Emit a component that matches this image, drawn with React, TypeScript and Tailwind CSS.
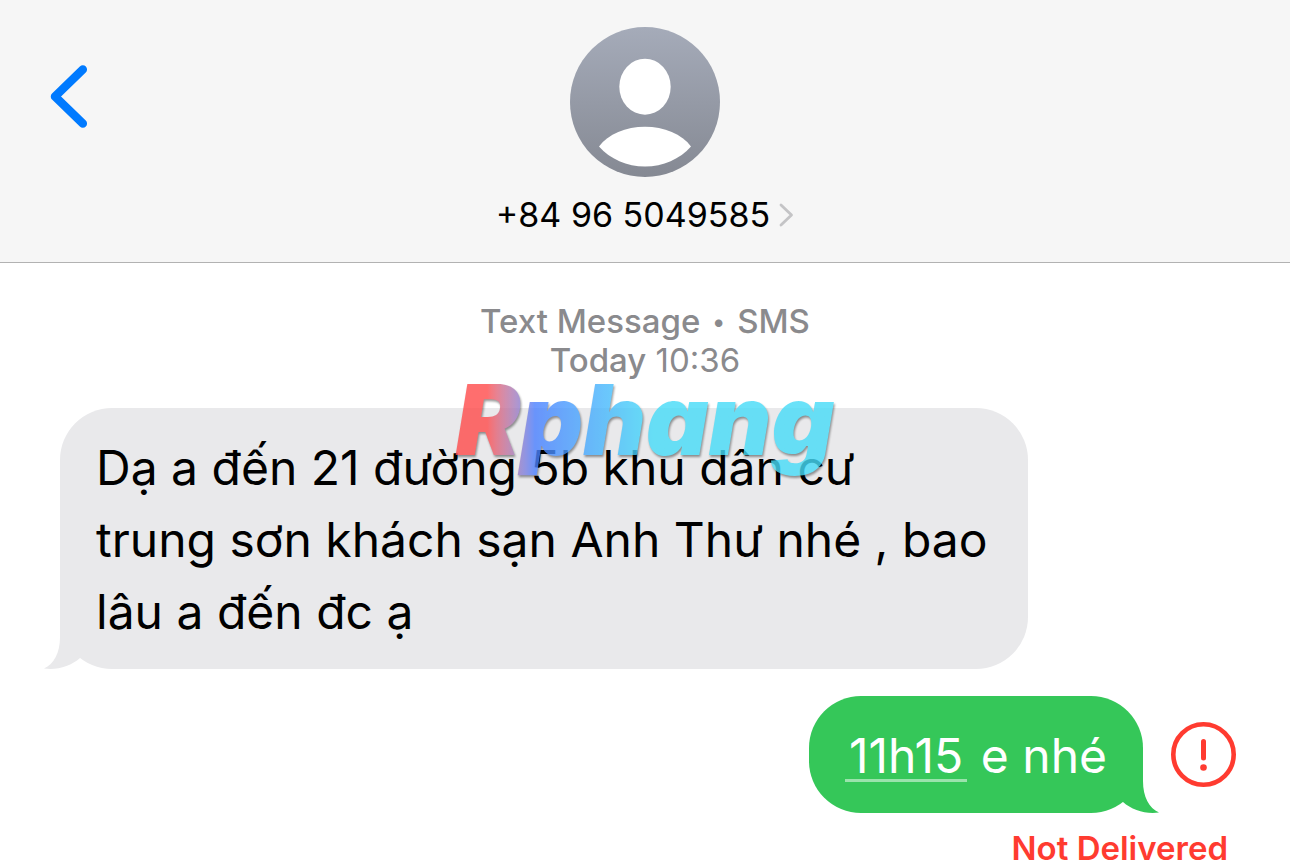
import React from 'react';

interface Message {
  from: 'them' | 'me';
  time?: string;
  text: string;
  failed?: boolean;
}

const MESSAGES: Message[] = [
  { from: 'them', text: 'Dạ a đến 21 đường 5b khu dân cư\ntrung sơn khách sạn Anh Thư nhé , bao\nlâu a đến đc ạ' },
  { from: 'me', time: '11h15', text: ' e nhé', failed: true },
];

const Avatar: React.FC = () => (
  <svg viewBox="0 0 150 150" className="size-[150px]" aria-hidden="true">
    <defs>
      <linearGradient id="avatar" x1="0" y1="0" x2="0" y2="1">
        <stop offset="0" stopColor="#a5abb9" />
        <stop offset="1" stopColor="#858993" />
      </linearGradient>
    </defs>
    <circle cx="75" cy="75" r="75" fill="url(#avatar)" />
    <ellipse cx="75" cy="59.7" rx="25.7" ry="28" fill="#fff" />
    <path d="M29 119.5C38 107 56 99.7 75 99.7S112 107 121 119.5C110 132 93 139.5 75 139.5S40 132 29 119.5Z" fill="#fff" />
  </svg>
);

const Header: React.FC = () => (
  <header className="grid grid-cols-[1fr_auto_1fr] items-start border-b border-[#b2b2b2] bg-[#f6f6f6] pt-[27px] pb-[27px]">
    <button type="button" aria-label="Back" className="ml-12 mt-9 justify-self-start">
      <svg viewBox="0 0 42 68" className="h-[68px] w-[42px]" fill="none" stroke="#007aff" strokeWidth="8.5" strokeLinecap="round" strokeLinejoin="round">
        <path d="M34.8 6.5 7 33.5 34.8 60.5" />
      </svg>
    </button>
    <button type="button" className="flex flex-col items-center gap-[18px]">
      <Avatar />
      <span className="flex items-center gap-2 text-[34px] leading-10 text-black">
        +84 96 5049585
        <svg viewBox="0 0 16 26" className="h-[26px] w-4" fill="none" stroke="#c4c4c6" strokeWidth="2.8" strokeLinecap="round" strokeLinejoin="round">
          <path d="M3 3 13.5 13 3 23" />
        </svg>
      </span>
    </button>
  </header>
);

const Bubble: React.FC<{ message: Message }> = ({ message }) => {
  if (message.from === 'them') {
    return (
      <div className="relative ml-[60px] w-3/4 rounded-[52px] bg-[#e9e9eb] px-9 pt-6 pb-[21px] text-black">
        <p className="whitespace-pre-line">{message.text}</p>
        <svg viewBox="0 0 37 52" className="absolute bottom-0 -left-4 h-[52px] w-[37px]" fill="#e9e9eb">
          <path d="M16 0V20C16 36 10 47 0 51.5C13 53.5 27 49 36 41V0Z" />
        </svg>
      </div>
    );
  }

  return (
    <div className="relative rounded-[52px] bg-[#35c759] px-9 pt-6 pb-[21px] text-white">
      <p className="whitespace-pre">
        <a href="#time" className="inline-block border-b-[3px] border-white/50 px-1 leading-[46px]">{message.time}</a>
        {message.text}
      </p>
      <svg viewBox="0 0 37 52" className="absolute -right-4 bottom-0 h-[52px] w-[37px]" fill="#35c759">
        <path d="M21 0V20C21 36 27 47 37 51.5C24 53.5 10 49 1 41V0Z" />
      </svg>
    </div>
  );
};

const RetryButton: React.FC = () => (
  <button type="button" aria-label="Retry sending">
    <svg viewBox="0 0 65 65" className="size-[65px]" fill="none" stroke="#ff3b30">
      <circle cx="32.5" cy="32.5" r="30.2" strokeWidth="4.6" />
      <path d="M32.5 19.5V36" strokeWidth="5" strokeLinecap="round" />
      <circle cx="32.5" cy="45.5" r="3.3" fill="#ff3b30" stroke="none" />
    </svg>
  </button>
);

const App: React.FC = () => {
  return (
    <div className="min-h-screen overflow-hidden bg-white font-['Inter',sans-serif]">
      <Header />

      <main className="pt-[39px]">
        <div className="text-center text-[33px] leading-[39px] text-[#8a8a8d]">
          <p className="flex items-center justify-center gap-3 font-medium">
            <span>Text Message</span>
            <span className="text-2xl leading-none">•</span>
            <span>SMS</span>
          </p>
          <p><span className="font-medium">Today</span> 10:36</p>
        </div>

        <div className="relative mt-7 flex flex-col gap-[27px] text-[48px] leading-[72px]">
          {MESSAGES.map((message, i) => (
            <div key={i} className={message.from === 'me' ? 'flex items-center justify-end gap-7 pr-[54px]' : ''}>
              <Bubble message={message} />
              {message.failed && <RetryButton />}
            </div>
          ))}

          {/* Site watermark */}
          <div className="pointer-events-none absolute inset-x-0 -top-12 flex justify-center opacity-80 drop-shadow-[1px_2px_1px_rgba(0,0,0,0.5)]">
            <span className="bg-linear-to-r from-[#ff4b4b] from-10% via-[#4a7fff] via-22% to-[#46dcf8] to-52% bg-clip-text px-2 text-[97px] leading-[120px] font-black italic text-transparent">
              Rphang
            </span>
          </div>
        </div>

        <p className="mt-[19px] pr-[62px] text-right text-[33px] leading-8 font-semibold text-[#ff3b30]">Not Delivered</p>
      </main>
    </div>
  );
};

export default App;
